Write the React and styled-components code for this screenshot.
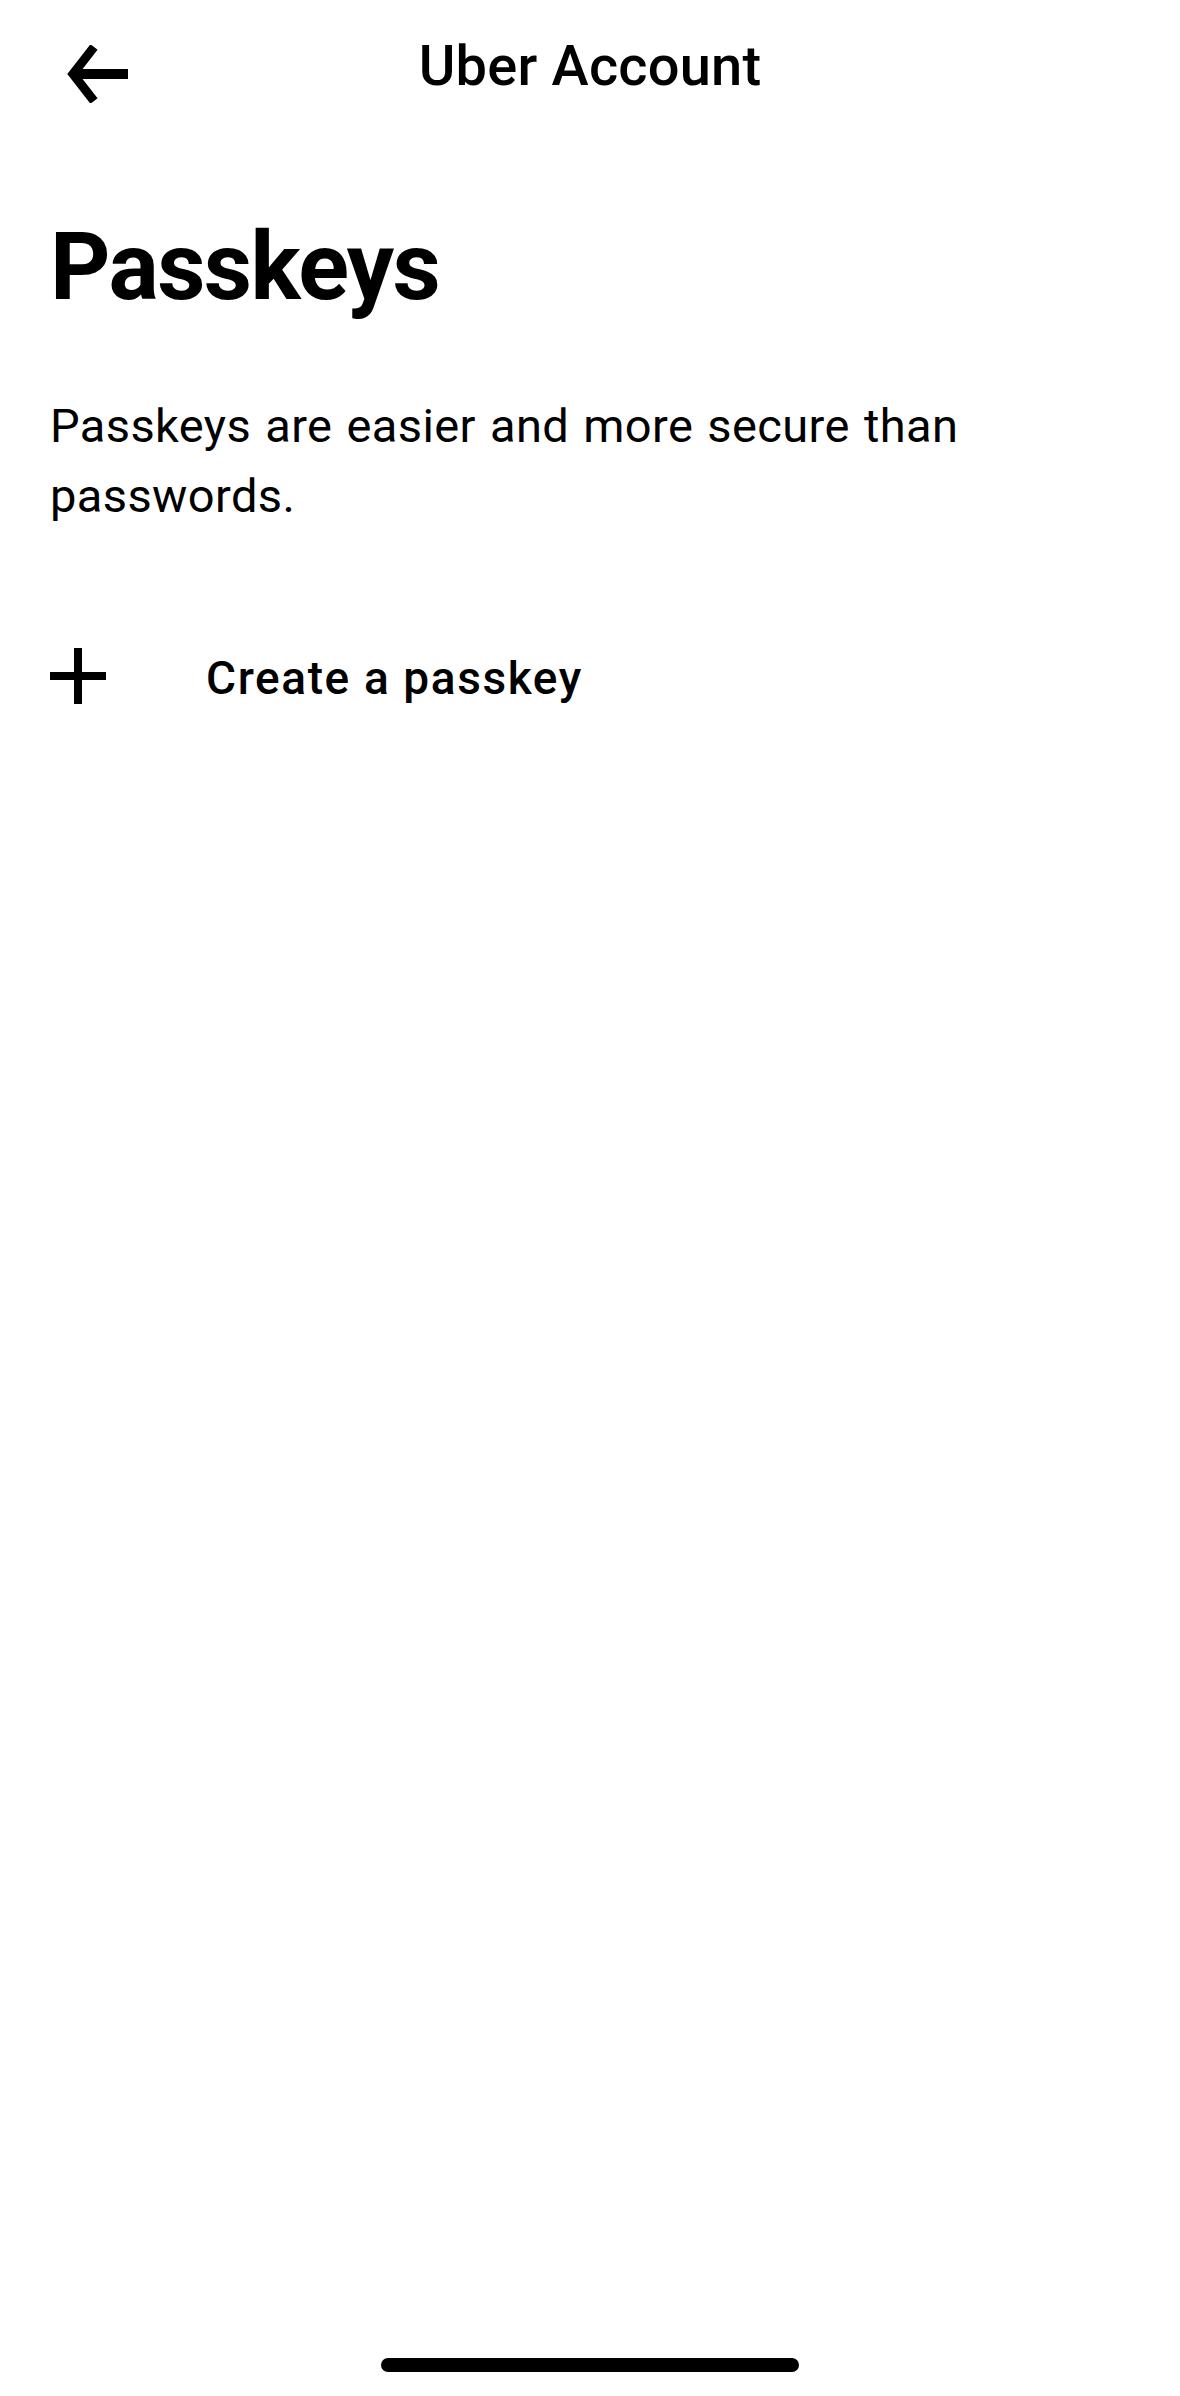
import React from "react";
import styled, { createGlobalStyle } from "styled-components";

const GlobalStyle = createGlobalStyle`
  html, body {
    margin: 0;
    padding: 0;
    background: #ffffff;
  }
  body {
    font-family: Roboto, "Liberation Sans", Arial, sans-serif;
    color: #000000;
    -webkit-font-smoothing: antialiased;
  }
  * { box-sizing: border-box; }
`;

const Screen = styled.div`
  min-height: 2396px;
  display: flex;
  flex-direction: column;
  background: #ffffff;
`;

const Header = styled.header`
  display: grid;
  grid-template-columns: 1fr auto 1fr;
  align-items: start;
  padding: 38px 64px 0;
`;

const BackButton = styled.button`
  justify-self: start;
  margin-top: 7px;
  padding: 0;
  border: 0;
  background: none;
  width: 64px;
  height: 58px;
  display: flex;
  cursor: pointer;
`;

const HeaderTitle = styled.h1`
  margin: 0;
  font-family: Roboto, "Liberation Sans", Arial, sans-serif;
  font-weight: 500;
  font-size: 56px;
  line-height: 56px;
  letter-spacing: 0.2px;
  color: #000;
  white-space: nowrap;
`;

const Content = styled.main`
  display: flex;
  flex-direction: column;
  padding: 0 50px;
`;

const PageTitle = styled.h2`
  margin: 112px 0 0;
  font-family: Roboto, "Liberation Sans", Arial, sans-serif;
  font-weight: 700;
  font-size: 94px;
  line-height: 104px;
  letter-spacing: -1.6px;
  color: #000;
`;

const Description = styled.p`
  margin: 72px 0 0;
  font-family: Roboto, "Liberation Sans", Arial, sans-serif;
  font-weight: 400;
  font-size: 47px;
  line-height: 70px;
  letter-spacing: 0.4px;
  word-spacing: 2px;
  color: #000;
  max-width: 1000px;
`;

const ActionRow = styled.button`
  margin-top: 119px;
  display: flex;
  align-items: center;
  gap: 100px;
  padding: 0;
  border: 0;
  background: none;
  height: 56px;
  cursor: pointer;
  text-align: left;
`;

const ActionIcon = styled.span`
  width: 56px;
  height: 56px;
  display: flex;
  align-items: center;
  justify-content: center;
  flex: none;
  margin-top: -4px;
`;

const ActionLabel = styled.span`
  font-family: Roboto, "Liberation Sans", Arial, sans-serif;
  font-weight: 500;
  font-size: 46px;
  line-height: 56px;
  letter-spacing: 1.6px;
  color: #000;
`;

const HomeIndicator = styled.div`
  margin: auto auto 24px;
  width: 418px;
  height: 14px;
  border-radius: 7px;
  background: #000;
`;

const BackArrow = () => (
  <svg width="64" height="58" viewBox="0 0 64 58" fill="none">
    <path d="M30 2 L9 29 L30 56" stroke="#000" strokeWidth="9" strokeLinejoin="miter" strokeMiterlimit="4" />
    <path d="M8 29 H64" stroke="#000" strokeWidth="10" />
  </svg>
);

const PlusIcon = () => (
  <svg width="56" height="56" viewBox="0 0 56 56" fill="none">
    <path d="M28 0 V56 M0 28 H56" stroke="#000" strokeWidth="8" />
  </svg>
);

export default function App() {
  return (
    <>
      <GlobalStyle />
      <Screen>
        <Header>
          <BackButton aria-label="Back">
            <BackArrow />
          </BackButton>
          <HeaderTitle>Uber Account</HeaderTitle>
          <span />
        </Header>
        <Content>
          <PageTitle>Passkeys</PageTitle>
          <Description>
            Passkeys are easier and more secure than passwords.
          </Description>
          <ActionRow>
            <ActionIcon>
              <PlusIcon />
            </ActionIcon>
            <ActionLabel>Create a passkey</ActionLabel>
          </ActionRow>
        </Content>
        <HomeIndicator />
      </Screen>
    </>
  );
}
